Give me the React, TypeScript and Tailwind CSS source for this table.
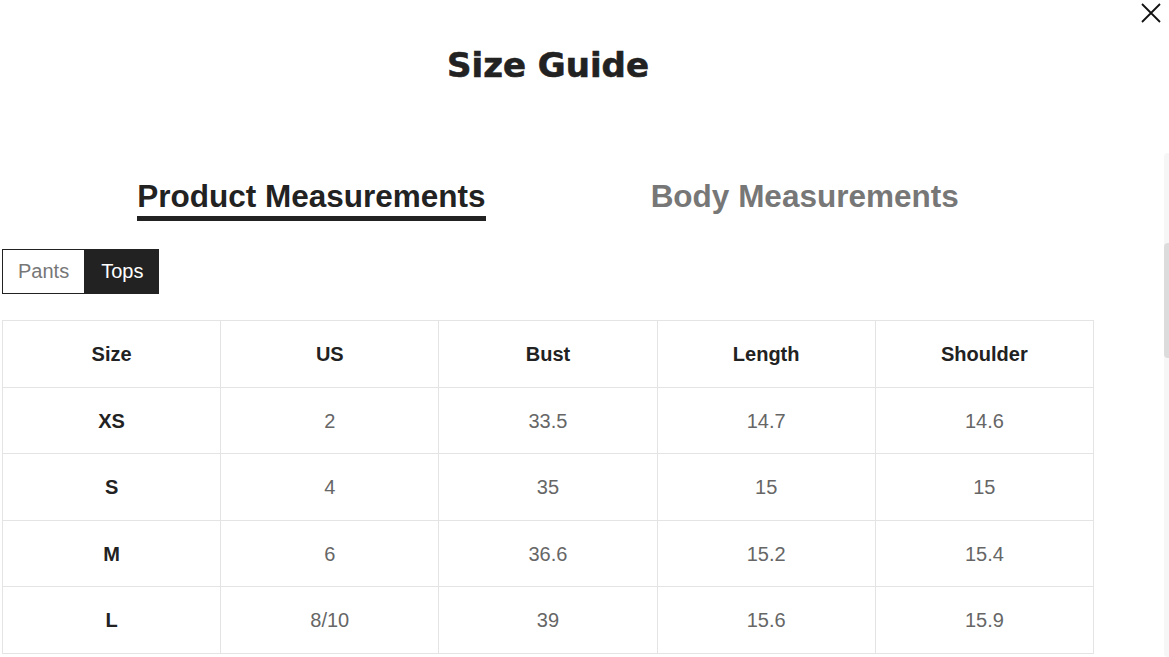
import React, { useState } from 'react';

const rows = [
  { size: 'XS', us: '2', bust: '33.5', length: '14.7', shoulder: '14.6' },
  { size: 'S', us: '4', bust: '35', length: '15', shoulder: '15' },
  { size: 'M', us: '6', bust: '36.6', length: '15.2', shoulder: '15.4' },
  { size: 'L', us: '8/10', bust: '39', length: '15.6', shoulder: '15.9' },
];

export default function App() {
  const [tab, setTab] = useState<'product' | 'body'>('product');
  const [kind, setKind] = useState<'pants' | 'tops'>('tops');

  return (
    <div className="relative w-[1169px] h-[657px] overflow-hidden bg-white font-['Liberation_Sans',Arial,sans-serif]">
      {/* close */}
      <button className="absolute left-[1140px] top-[2px] w-[22px] h-[22px] flex items-center justify-center">
        <svg width="22" height="22" viewBox="0 0 22 22" fill="none" stroke="#111" strokeWidth="1.8">
          <path d="M2 2 L20 20 M20 2 L2 20" />
        </svg>
      </button>

      {/* scrollbar */}
      <div className="absolute left-[1164px] top-[153px] w-[5px] h-[504px] bg-[#f6f6f6] rounded-l-sm">
        <div className="mt-[90px] h-[115px] w-full bg-[#dcdcdc] rounded-l-sm" />
      </div>

      <div className="w-[1094px] pl-[2px]">
        <h1 className="pt-[45px] text-center leading-[40px] text-[34px] font-bold text-[#222] font-['DejaVu_Sans',sans-serif] [-webkit-text-stroke:0.6px_#222]">
          Size Guide
        </h1>

        <div className="mt-[93px] flex justify-center gap-[165px]">
          <button
            onClick={() => setTab('product')}
            className={`text-[31.5px] leading-[36px] font-bold pb-[2px] border-b-[5px] ${tab === 'product' ? 'text-[#222] border-[#222]' : 'text-[#777] border-transparent'}`}
          >
            Product Measurements
          </button>
          <button
            onClick={() => setTab('body')}
            className={`text-[31.5px] leading-[36px] font-bold pb-[2px] border-b-[5px] ${tab === 'body' ? 'text-[#222] border-[#222]' : 'text-[#777] border-transparent'}`}
          >
            Body Measurements
          </button>
        </div>

        <div className="mt-[28px] flex">
          <button
            onClick={() => setKind('pants')}
            className={`h-[45px] px-[15px] text-[20px] leading-[43px] border border-[#222] ${kind === 'pants' ? 'bg-[#222] text-white' : 'bg-white text-[#777]'}`}
          >
            Pants
          </button>
          <button
            onClick={() => setKind('tops')}
            className={`h-[45px] px-[15px] text-[20px] leading-[43px] border border-[#222] ${kind === 'tops' ? 'bg-[#222] text-white' : 'bg-white text-[#777]'}`}
          >
            Tops
          </button>
        </div>

        <table className="mt-[26px] w-[1092px] table-fixed border-collapse text-[20px]">
          <thead>
            <tr className="h-[67px]">
              {['Size', 'US', 'Bust', 'Length', 'Shoulder'].map((h) => (
                <th key={h} className="border border-[#e4e4e4] font-bold text-[#222] text-center">
                  {h}
                </th>
              ))}
            </tr>
          </thead>
          <tbody>
            {rows.map((r, i) => (
              <tr key={r.size} className={i % 2 === 0 ? 'h-[66px]' : 'h-[67px]'}>
                <td className="border border-[#e4e4e4] text-center font-bold text-[#222]">{r.size}</td>
                <td className="border border-[#e4e4e4] text-center text-[#666]">{r.us}</td>
                <td className="border border-[#e4e4e4] text-center text-[#666]">{r.bust}</td>
                <td className="border border-[#e4e4e4] text-center text-[#666]">{r.length}</td>
                <td className="border border-[#e4e4e4] text-center text-[#666]">{r.shoulder}</td>
              </tr>
            ))}
          </tbody>
        </table>
      </div>
    </div>
  );
}
